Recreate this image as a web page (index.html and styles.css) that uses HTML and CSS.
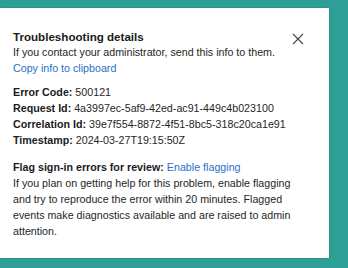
FILE: index.html
```html
<!DOCTYPE html>
<html>
<head><link rel="stylesheet" href="styles.css"></head>
<body>
<div class="panel">
  <div class="head">
    <div class="title">Troubleshooting details</div>
    <svg class="close" width="12" height="12" viewBox="0 0 12 12"><path d="M1 1L11 11M11 1L1 11" stroke="#444" stroke-width="1.1" fill="none"/></svg>
  </div>
  <div class="line">If you contact your administrator, send this info to them.</div>
  <div class="line"><a class="link">Copy info to clipboard</a></div>
  <div class="info">
    <div class="line"><b>Error Code:</b> 500121</div>
    <div class="line"><b>Request Id:</b> 4a3997ec-5af9-42ed-ac91-449c4b023100</div>
    <div class="line"><b>Correlation Id:</b> 39e7f554-8872-4f51-8bc5-318c20ca1e91</div>
    <div class="line"><b>Timestamp:</b> 2024-03-27T19:15:50Z</div>
  </div>
  <div class="flag">
    <div class="line"><b>Flag sign-in errors for review:</b> <a class="link">Enable flagging</a></div>
    <div class="para">If you plan on getting help for this problem, enable flagging and try to reproduce the error within 20 minutes. Flagged events make diagnostics available and are raised to admin attention.</div>
  </div>
</div>
</body>
</html>
```
FILE: styles.css
```css
html, body { margin: 0; padding: 0; }
body {
  width: 348px; height: 268px; overflow: hidden;
  background: #2e9f97;
  font-family: "Liberation Sans", Arial, sans-serif;
  color: #262626;
}
.panel {
  margin-top: 8px;
  width: 329px; height: 250px;
  box-sizing: border-box;
  background: #fff;
  padding: 20px 30px 0 13px;
  box-shadow: 0 0 2px rgba(0,0,0,0.25);
}
.head { display: flex; justify-content: space-between; align-items: center; height: 17px; margin-bottom: -1px; margin-right: -5px; }
.title { font-size: 11.6px; font-weight: bold; color: #1b1b1b; }
.close { margin-top: 4px; }
.line { font-size: 10.7px; line-height: 16px; white-space: nowrap; }
.link { color: #2870c8; }
.info { margin-top: 8px; }
.flag { margin-top: 11px; }
.para { font-size: 10.7px; line-height: 16px; }
b { color: #1b1b1b; }
```
